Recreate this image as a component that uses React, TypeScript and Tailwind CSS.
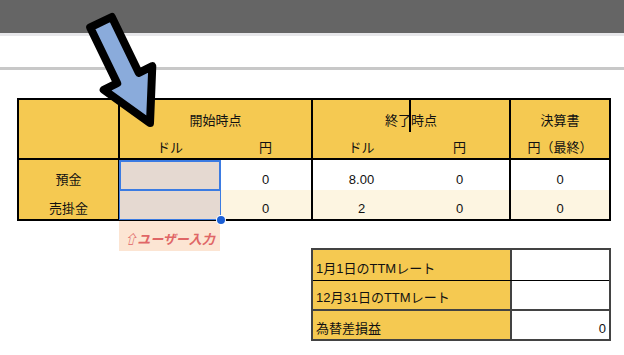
import React from 'react';

const FONT = { fontFamily: '"Liberation Sans", "Noto Sans CJK JP", sans-serif' };

const Cell: React.FC<{ className?: string; children?: React.ReactNode }> = ({ className = '', children }) => (
  <div className={`flex items-end justify-center pb-[2px] text-[13px] leading-[17px] text-[#111] ${className}`}>
    {children}
  </div>
);

const App: React.FC = () => {
  return (
    <div className="relative w-[624px] h-[355px] overflow-hidden bg-white" style={FONT}>
      {/* sheet chrome */}
      <div className="h-[33px] bg-[#656565]" />
      <div className="h-[3px] bg-[#e7e7ea]" />
      <div className="h-[31px] bg-white" />
      <div className="h-[3px] bg-[#c8c8c8]" />

      <div className="pl-[17px] pt-[28px]">
        {/* main table */}
        <div className="relative w-[594px] border-2 border-black">
          {/* header */}
          <div className="grid grid-cols-[99px_102px_91px_99px_99px_100px] grid-rows-[35px_23px] bg-[#f5c951] border-b-2 border-black">
            <div className="row-span-2" />
            <Cell className="col-span-2 border-l-2 border-black pb-[6px]">開始時点</Cell>
            <Cell className="col-span-2 border-l-2 border-black pb-[6px]">終了時点</Cell>
            <Cell className="border-l-2 border-black pb-[6px]">決算書</Cell>
            <Cell className="border-l-2 border-black">ドル</Cell>
            <Cell>円</Cell>
            <Cell className="border-l-2 border-black">ドル</Cell>
            <Cell>円</Cell>
            <Cell className="border-l-2 border-black">円（最終）</Cell>
          </div>
          {/* rows */}
          <div className="grid grid-cols-[99px_102px_91px_99px_99px_100px] grid-rows-[30px_29px]">
            <Cell className="bg-[#f5c951]">預金</Cell>
            <Cell className="bg-[#e5d9d1] border-l-2 border-black" />
            <Cell className="bg-white">0</Cell>
            <Cell className="bg-white border-l-2 border-black">8.00</Cell>
            <Cell className="bg-white">0</Cell>
            <Cell className="bg-white border-l-2 border-black">0</Cell>
            <Cell className="bg-[#f5c951]">売掛金</Cell>
            <Cell className="bg-[#e5d9d1] border-l-2 border-black" />
            <Cell className="bg-[#fdf5e1]">0</Cell>
            <Cell className="bg-[#fdf5e1] border-l-2 border-black">2</Cell>
            <Cell className="bg-[#fdf5e1]">0</Cell>
            <Cell className="bg-[#fdf5e1] border-l-2 border-black">0</Cell>
          </div>

          {/* selection range + active cell */}
          <div className="absolute left-[100px] top-[60px] w-[102px] h-[60px] border border-[#3b7be2]" />
          <div className="absolute left-[100px] top-[60px] w-[102px] h-[31px] border-2 border-[#3b7be2]" />
          <div className="absolute left-[198px] top-[116px] w-[8px] h-[8px] rounded-full bg-[#1b5fd6] ring-1 ring-white" />
          {/* text cursor */}
          <div className="absolute left-[390px] top-0 w-[2px] h-[32px] bg-black" />
        </div>

        <div className="flex items-start">
          <div className="w-[102px]" />
          <div className="w-[101px] h-[30px] bg-[#fce5d3] flex items-end justify-center pb-[3px] text-[13px] leading-[17px] font-bold italic text-[#e06666]">
            ⇧ユーザー入力
          </div>
          {/* rate table */}
          <div className="ml-[91px] mt-[27px] w-[300px] border-2 border-[#434343] text-[13px] leading-[17px] text-[#111]">
            <div className="flex h-[31px] border-b border-black">
              <div className="w-[197px] bg-[#f5c951] flex items-end pl-[3px] pb-[3px]">1月1日のTTMレート</div>
              <div className="flex-1 border-l-2 border-[#434343] bg-white" />
            </div>
            <div className="flex h-[30px] border-b-2 border-[#434343]">
              <div className="w-[197px] bg-[#f5c951] flex items-end pl-[3px] pb-[3px]">12月31日のTTMレート</div>
              <div className="flex-1 border-l-2 border-[#434343] bg-white" />
            </div>
            <div className="flex h-[28px]">
              <div className="w-[197px] bg-[#f5c951] flex items-end pl-[3px] pb-[2px]">為替差損益</div>
              <div className="flex-1 border-l-2 border-[#434343] bg-white flex items-end justify-end pr-[3px] pb-[2px]">0</div>
            </div>
          </div>
        </div>
      </div>

      {/* pointer arrow */}
      <svg className="absolute left-0 top-0 pointer-events-none" width="624" height="355" viewBox="0 0 624 355">
        <polygon
          points="111.8,17 138.8,72.8 152.3,66.2 150,123 103.7,89.8 117.2,83.2 90.2,27.4"
          fill="#8aabdb"
          stroke="#000"
          strokeWidth="8"
          strokeLinejoin="round"
        />
      </svg>
    </div>
  );
};

export default App;
